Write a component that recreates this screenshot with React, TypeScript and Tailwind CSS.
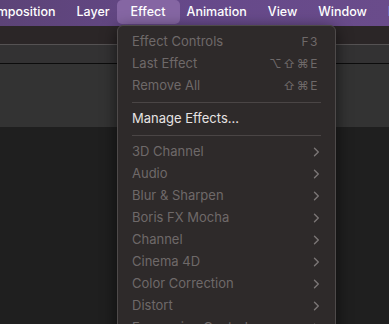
import React from "react";

const Chevron = () => (
  <svg width="7" height="10" viewBox="0 0 7 10" className="mr-[1px]">
    <path d="M1.5 1.2 L5.3 5 L1.5 8.8" fill="none" stroke="#7b7676" strokeWidth="1.4" strokeLinecap="round" strokeLinejoin="round" />
  </svg>
);

type Item = { label: string; shortcut?: string; sub?: boolean; enabled?: boolean };

const Row = ({ label, shortcut, sub, enabled }: Item) => (
  <div className="flex h-[22px] items-center justify-between pl-[14px] pr-[14px]">
    <span className={enabled ? "text-[#e6e3e3]" : "text-[#6e6969]"}>{label}</span>
    {shortcut && <span className="text-[#6e6969] text-[12px] tracking-[1.5px] mr-[2px]">{shortcut}</span>}
    {sub && <Chevron />}
  </div>
);

const Sep = () => (
  <div className="flex h-[11px] items-center px-[14px]">
    <div className="h-px w-full bg-[#4a4545]" />
  </div>
);

export default function App() {
  const subs = [
    "3D Channel",
    "Audio",
    "Blur & Sharpen",
    "Boris FX Mocha",
    "Channel",
    "Cinema 4D",
    "Color Correction",
    "Distort",
    "Expression Controls",
  ];
  return (
    <div
      className="relative h-[324px] w-[389px] overflow-hidden bg-[#1f1f1f]"
      style={{ fontFamily: "Inter, 'Noto Sans', sans-serif" }}
    >
      {/* menubar */}
      <div className="flex h-[26px] items-start bg-gradient-to-r from-[#5c4377] via-[#66498a] to-[#6a4c8b] text-[12.5px] font-medium text-white">
        <div className="flex h-[24px] items-center ml-[-20px] pr-[21px]">Composition</div>
        <div className="flex h-[24px] items-center pr-[7px]">Layer</div>
        <div className="flex h-[24px] items-center rounded-[5px] bg-[#8566a3] px-[14px]">Effect</div>
        <div className="flex h-[24px] items-center pl-[7px] pr-[21px]">Animation</div>
        <div className="flex h-[24px] items-center pr-[21px]">View</div>
        <div className="flex h-[24px] items-center pr-[21px]">Window</div>
        <div className="flex h-[24px] items-center">Help</div>
      </div>

      {/* background panels */}
      <div className="h-[18px] bg-[#2b2627]" />
      <div className="h-px bg-[#555253]" />
      <div className="h-[18px] bg-[#333233]" />
      <div className="h-px bg-[#0c0c0c]" />
      <div className="h-[63px] bg-[#333333]" />

      {/* dropdown menu */}
      <div className="absolute left-[117px] top-[25px] w-[219px] h-[320px] rounded-[6px] border border-[#4e4a4a] bg-[#2e2a2a] pt-[5px] text-[13px] shadow-[0_4px_16px_rgba(0,0,0,0.6)]">
        <Row label="Effect Controls" shortcut="F3" />
        <Row label="Last Effect" shortcut="⌥⇧⌘E" />
        <Row label="Remove All" shortcut="⇧⌘E" />
        <Sep />
        <Row label="Manage Effects..." enabled />
        <Sep />
        {subs.map((s) => (
          <Row key={s} label={s} sub />
        ))}
      </div>
    </div>
  );
}
